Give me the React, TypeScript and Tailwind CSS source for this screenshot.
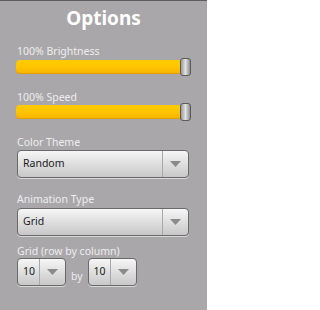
const font = { fontFamily: '"Noto Sans", "Open Sans", sans-serif' };

function Slider() {
  return (
    <div className="relative h-[18px] w-[175px] flex items-center">
      <div className="h-[14px] w-[170px] rounded-[4px] bg-gradient-to-b from-[#ffcc00] via-[#ffc400] to-[#f7b200] shadow-[inset_0_-1px_0_#e0a000]" />
      <div className="absolute right-0 top-0 h-[18px] w-[11px] rounded-[3px] border border-[#5a5a5a] bg-gradient-to-r from-[#9a9a9a] via-[#e2e2e2] to-[#8e8e8e]" />
    </div>
  );
}

function Arrow() {
  return (
    <svg width="11" height="6" viewBox="0 0 11 6">
      <path d="M0 0 H11 L5.5 6 Z" fill="#8a8a8a" />
    </svg>
  );
}

function Spinner({ value, width, btn }: { value: string; width: string; btn: string }) {
  return (
    <div
      className={`${width} h-[28px] flex rounded-[4px] border border-[#6a6a6a] bg-gradient-to-b from-[#f6f6f6] to-[#c8c8c8] shadow-[0_1px_0_#d8d8d8]`}
    >
      <div className="flex-1 flex items-center pl-[5px] text-[10.5px] text-[#1a1a1a]">{value}</div>
      <div className={`${btn} flex items-center justify-center border-l border-[#a8a8a8]`}>
        <Arrow />
      </div>
    </div>
  );
}

function Label({ children, className = "" }: { children: React.ReactNode; className?: string }) {
  return <div className={`text-[10.5px] leading-[14px] text-[#eeeeee] ${className}`}>{children}</div>;
}

export default function App() {
  return (
    <div style={font} className="w-[207px] h-[310px] bg-[#a9a7aa] border-t border-[#5e5e5e] pl-[16px] overflow-hidden">
      <div className="w-[175px] text-center text-[19px] font-bold leading-[22px] text-white mt-[6px]">Options</div>

      <Label className="mt-[15px] pl-[1px]">100% Brightness</Label>
      <div className="mt-[0px]">
        <Slider />
      </div>

      <Label className="mt-[14px] pl-[1px]">100% Speed</Label>
      <div className="-mt-[1px]">
        <Slider />
      </div>

      <div className="pl-[1px]">
        <Label className="mt-[14px]">Color Theme</Label>
        <div className="mt-[1px]">
          <Spinner value="Random" width="w-[172px]" btn="w-[26px]" />
        </div>

        <Label className="mt-[14px]">Animation Type</Label>
        <div className="mt-[2px]">
          <Spinner value="Grid" width="w-[172px]" btn="w-[26px]" />
        </div>

        <Label className="mt-[8px]">Grid (row by column)</Label>
        <div className="mt-0 flex items-end">
          <Spinner value="10" width="w-[49px]" btn="w-[26px]" />
          <span className="mx-[5px] mb-[1px] text-[10.5px] text-[#eeeeee]">by</span>
          <Spinner value="10" width="w-[49px]" btn="w-[26px]" />
        </div>
      </div>
    </div>
  );
}
